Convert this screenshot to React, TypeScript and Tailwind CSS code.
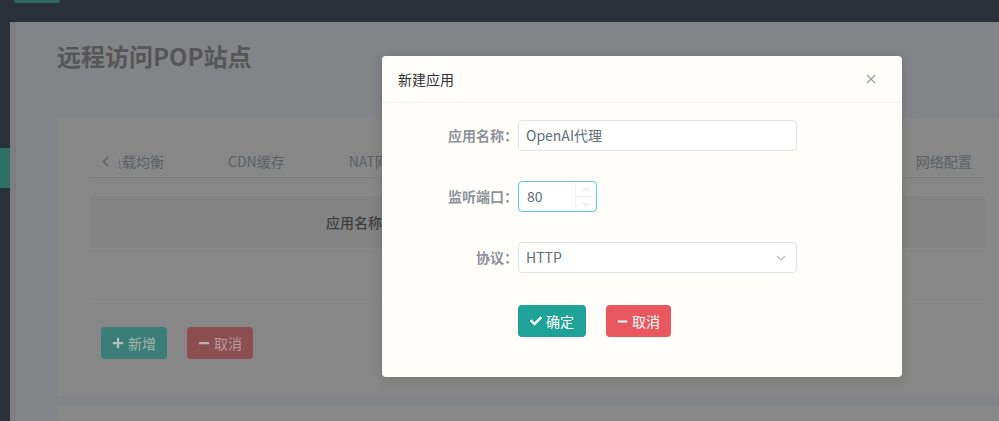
import { FaCheck, FaMinus, FaPlus } from "react-icons/fa";

const font = { fontFamily: '"Noto Sans CJK SC", "Noto Sans", sans-serif' };

const tabs = ["负载均衡", "CDN缓存", "NAT网关", "端口映射", "访问控制", "流量统计", "ACL", "网络配置"];

function Field({ label, children }: { label: string; children: React.ReactNode }) {
  return (
    <div className="flex items-center">
      <label className="w-[136px] shrink-0 text-right text-[14px] font-bold text-[#8e939a]">{label}：</label>
      {children}
    </div>
  );
}

export default function App() {
  return (
    <div className="relative h-[421px] w-[999px] overflow-hidden bg-[#838487]" style={font}>
      {/* top bar */}
      <header className="h-[22px] bg-[#2b313a]">
        <div className="ml-[14px] h-[3px] w-[46px] rounded-b-[3px] bg-[#2f6a62]" />
      </header>

      <div className="flex">
        <aside className="h-[399px] w-[10px] shrink-0 bg-[#2b313a]">
          <div className="mt-[126px] h-[40px] bg-[#307167]" />
        </aside>
        <div className="h-[399px] w-[6px] shrink-0 bg-[#7e7e7e]" />

        <main className="flex-1 pl-[41px]">
          <h1 className="mt-[18px] h-[32px] text-[24px] font-bold leading-[32px] text-[#565656]">远程访问POP站点</h1>

          <section className="mt-[46px] w-[960px] bg-[#878787] px-[32px] pb-[37px] pt-[28px]">
            {/* tabs */}
            <div className="flex h-[32px] items-center border-b border-[#7b7c7e]">
              <div className="flex w-[30px] shrink-0 justify-center pl-[3px] text-[#5c6066]">
                <svg width="7" height="11" viewBox="0 0 7 11" fill="none" stroke="currentColor" strokeWidth="1.4">
                  <path d="M6 1 1.5 5.5 6 10" />
                </svg>
              </div>
              <div className="flex-1 overflow-hidden">
                <div className="ml-[-43px] flex whitespace-nowrap text-[14px] text-[#5c6066]">
                  {tabs.map((t) => (
                    <span key={t} className="px-[32px]">{t}</span>
                  ))}
                </div>
              </div>
            </div>

            {/* table */}
            <div className="mt-[17px]">
              <div className="grid h-[53px] grid-cols-[130px_270px_220px_1fr] items-center border-t border-[#8a8a8a] bg-[#838383] text-center text-[14px] font-medium text-[#3e3e3e]">
                <span />
                <span>应用名称</span>
                <span>监听端口</span>
                <span>协议</span>
              </div>
              <div className="flex h-[54px] items-center justify-center border-y border-[#8a8a8a] text-[13px] text-[#6a6a6a]">
                暂无数据
              </div>
            </div>

            <div className="mt-[25px] flex gap-[20px] pl-[12px]">
              <button className="flex h-[32px] w-[66px] items-center justify-center gap-[4px] rounded-[4px] bg-[#3b7e77] text-[14px] text-[#a3b4b1]">
                <FaPlus className="h-[12px] w-[12px] text-[#b3c2c0]" />
                新增
              </button>
              <button className="flex h-[32px] w-[66px] items-center justify-center gap-[4px] rounded-[4px] bg-[#8c4e51] text-[14px] text-[#b59d9d]">
                <FaMinus className="h-[12px] w-[12px] text-[#c2adad]" />
                取消
              </button>
            </div>
          </section>

          <section className="mt-[10px] h-[40px] w-[960px] bg-[#878787]" />
        </main>
      </div>

      {/* modal */}
      <div className="absolute left-[382px] top-[56px] w-[520px] rounded-[4px] bg-[#fffefb] shadow-[0_2px_12px_rgba(0,0,0,0.15)]">
        <div className="flex h-[47px] items-center justify-between border-b border-[#eef0f3] pl-[16px] pr-[26px]">
          <span className="text-[14px] text-[#303133]">新建应用</span>
          <svg width="10" height="10" viewBox="0 0 10 10" stroke="#9a9da3" strokeWidth="1.3">
            <path d="M1 1 9 9M9 1 1 9" />
          </svg>
        </div>

        <div className="flex flex-col gap-[30px] pb-[40px] pt-[17px]">
          <Field label="应用名称">
            <div className="flex h-[31px] w-[279px] items-center rounded-[4px] border border-[#dfe3e8] bg-white px-[7px] text-[14px] text-[#646d78]">
              OpenAI代理
            </div>
          </Field>

          <Field label="监听端口">
            <div className="flex h-[31px] w-[79px] items-center rounded-[4px] border border-[#62cbc2] bg-white text-[14px] text-[#646d78]">
              <span className="flex-1 pl-[8px]">80</span>
              <div className="flex h-full w-[21px] flex-col border-l border-[#f0f2f5]">
                <div className="flex flex-1 items-center justify-center border-b border-[#f0f2f5]">
                  <svg width="8" height="5" viewBox="0 0 8 5" fill="none" stroke="#d3d7dd" strokeWidth="1">
                    <path d="M1 4.5 4 1.5 7 4.5" />
                  </svg>
                </div>
                <div className="flex flex-1 items-center justify-center">
                  <svg width="8" height="5" viewBox="0 0 8 5" fill="none" stroke="#d3d7dd" strokeWidth="1">
                    <path d="M1 0.5 4 3.5 7 0.5" />
                  </svg>
                </div>
              </div>
            </div>
          </Field>

          <Field label="协议">
            <div className="flex h-[31px] w-[279px] items-center justify-between rounded-[4px] border border-[#dfe3e8] bg-white pl-[7px] pr-[10px] text-[14px] text-[#646d78]">
              <span>HTTP</span>
              <svg width="10" height="6" viewBox="0 0 10 6" fill="none" stroke="#b4b9c0" strokeWidth="1.1">
                <path d="M1 1 5 5 9 1" />
              </svg>
            </div>
          </Field>

          <div className="mt-[2px] flex gap-[20px] pl-[136px]">
            <button className="flex h-[32px] w-[68px] items-center justify-center gap-[4px] rounded-[4px] bg-[#1fa398] text-[14px] text-white">
              <FaCheck className="h-[12px] w-[12px]" />
              确定
            </button>
            <button className="flex h-[32px] w-[65px] items-center justify-center gap-[4px] rounded-[4px] bg-[#e9585f] text-[14px] text-white">
              <FaMinus className="h-[11px] w-[11px]" />
              取消
            </button>
          </div>
        </div>
      </div>
    </div>
  );
}
